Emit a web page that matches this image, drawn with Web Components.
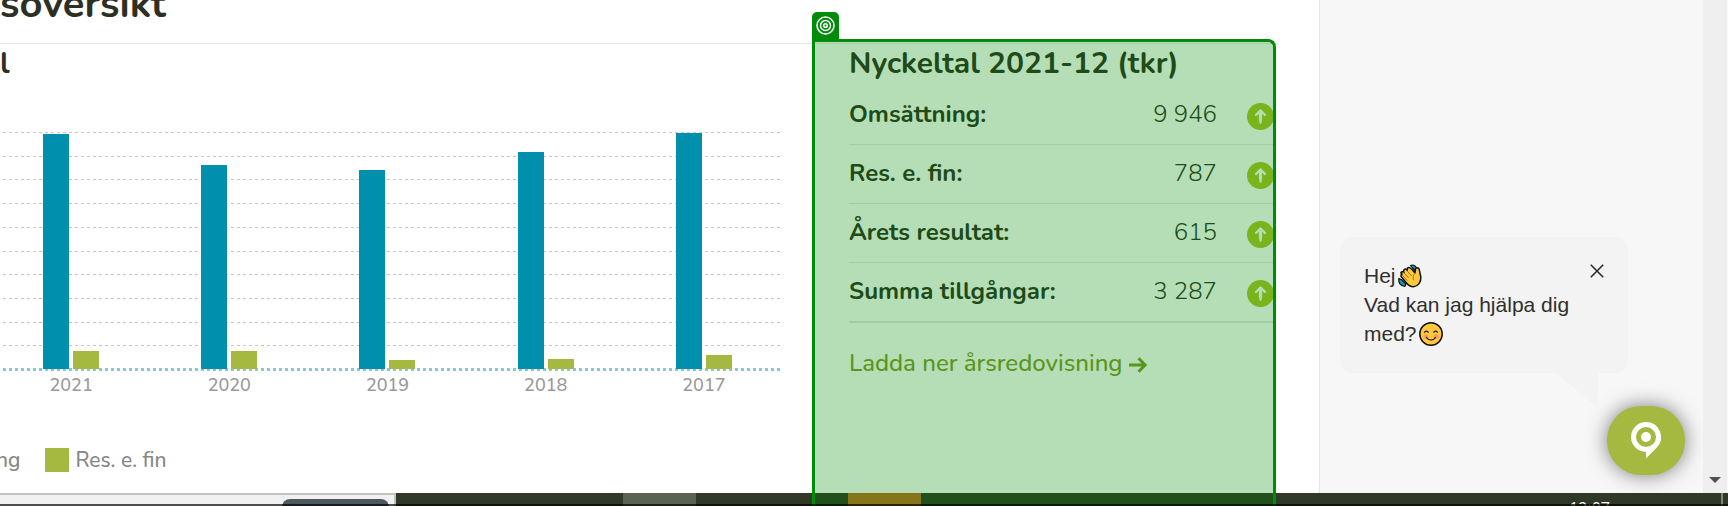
<!DOCTYPE html>
<html lang="sv">
<head>
<meta charset="utf-8">
<title>Nyckeltal</title>
<style>
body { margin: 0; font-family: Nunito, "Open Sans", sans-serif; color: #2c2f22; background: #fff; }
</style>
</head>
<body>
<app-page>
  <company-report>
    <key-chart slot="chart"></key-chart>
    <key-figures slot="figures"></key-figures>
  </company-report>
  <chat-aside></chat-aside>
  <scroll-track></scroll-track>
  <task-bar slot="bottom"></task-bar>
</app-page>
<script>
const define = (name, html) => customElements.define(name, class extends HTMLElement {
  constructor() {
    super();
    this.attachShadow({ mode: 'open' }).innerHTML = html(this);
  }
});

define('app-page', () => `
<style>
  :host { display: flex; flex-direction: column; height: 100vh; overflow: hidden; }
  main { flex: 1; display: flex; min-height: 0; }
</style>
<main><slot></slot></main>
<slot name="bottom"></slot>`);

define('company-report', () => `
<style>
  :host { flex: 1; min-width: 0; display: flex; flex-direction: column; padding-right: 43px; }
  header { border-bottom: 1px solid #e6e8e6; padding-bottom: 35px; }
  h1 { margin: 0; font-size: 40px; line-height: 8px; font-weight: 700; }
  .columns { flex: 1; display: grid; grid-template-columns: minmax(0, 1fr) 464px; }
</style>
<header><h1>söversikt</h1></header>
<div class="columns"><slot name="chart"></slot><slot name="figures"></slot></div>`);

const years = [
  [2021, 235, 18], [2020, 204, 18], [2019, 199, 9], [2018, 217, 10], [2017, 236, 14],
];
define('key-chart', () => `
<style>
  :host { display: block; padding-right: 29px; overflow: hidden; }
  h2 { margin: 0; font-size: 30px; line-height: 40px; font-weight: 700; }
  figure { margin: 48px 0 0 -8px; }
  .plot { display: grid; height: 237px; }
  .plot > * { grid-area: 1 / 1; }
  .lines { display: grid; grid-template-rows: repeat(10, 1fr); }
  .lines i { background: repeating-linear-gradient(90deg, #c6c6c6 0 2px, transparent 2px 5px, #c6c6c6 5px 6px) 0 0 / 100% 1px no-repeat; }
  .zero { align-self: end; height: 3px; margin-bottom: -2px;
    background: repeating-linear-gradient(90deg, #86c8d8 0 2px, transparent 2px 5px, #86c8d8 5px 6px); }
  .bars, .years { display: grid; grid-template-columns: repeat(5, 1fr); }
  .group { display: flex; justify-content: center; align-items: flex-end; gap: 4px; }
  .group b { width: 26px; height: var(--h); background: #008fac; }
  .group b + b { background: #a5b840; }
  .years { margin-top: 4px; font-size: 18px; line-height: 24px; font-weight: 500; text-align: center; color: #999; }
  .legend { display: flex; align-items: center; margin: 51px 0 0 -4px; font-size: 21px; line-height: 24px; font-weight: 500; color: #868686; }
  .legend i { width: 24px; height: 24px; margin: 0 6px 0 25px; background: #a5b840; }
</style>
<h2>l</h2>
<figure>
  <div class="plot">
    <div class="lines">${'<i></i>'.repeat(10)}</div>
    <div class="zero"></div>
    <div class="bars">${years.map(([, a, b]) => `<div class="group"><b style="--h:${a}px"></b><b style="--h:${b}px"></b></div>`).join('')}</div>
  </div>
  <div class="years">${years.map(([y]) => `<span>${y}</span>`).join('')}</div>
</figure>
<div class="legend"><span>ng</span><i></i><span>Res. e. fin</span></div>`);

define('up-icon', () => `
<style>:host { display: block; } svg { display: block; margin-left: auto; }</style>
<svg width="27" height="27" viewBox="0 0 27 27" aria-hidden="true">
  <circle cx="13.500" cy="13.500" r="13.500" fill="#abc428"/>
  <path d="M13.500 7.500 9 12M13.500 7.500 18 12" stroke="#fff" stroke-width="2.400" stroke-linecap="round"/>
  <path d="M11.900 7.500h3.200v9l-.8 4.200h-1.600l-.8-4.200z" fill="#fff"/>
</svg>`);

const figures = [['Omsättning:', '9 946'], ['Res. e. fin:', '787'], ['Årets resultat:', '615'], ['Summa tillgångar:', '3 287']];
define('key-figures', () => `
<style>
  :host { display: block; position: relative; padding: 0 2px 0 37px; }
  h2 { margin: 0 0 2px; font-size: 30px; line-height: 40px; font-weight: 700; }
  table { width: 100%; border-spacing: 0; font-size: 24px; line-height: 56px; }
  th, td { padding: 0 0 2px; border-bottom: 1px solid #e2e6e2; }
  th { text-align: left; font-weight: 700; }
  td { text-align: right; font-weight: 300; }
  td:last-child { width: 57px; padding: 2px 0 0; }
  tr:last-child > * { border-bottom-width: 2px; }
  a { display: inline-flex; align-items: center; gap: 6px; margin-top: 20px; color: #7f982a;
    font-size: 24px; line-height: 40px; font-weight: 500; text-decoration: none; }
  a svg { margin-top: 4px; }
</style>
<h2>Nyckeltal 2021-12 (tkr)</h2>
<table>${figures.map(([k, v]) => `<tr><th scope="row">${k}</th><td>${v}</td><td><up-icon></up-icon></td></tr>`).join('')}</table>
<a href="#arsredovisning">Ladda ner årsredovisning
  <svg width="18" height="16" viewBox="0 0 18 16" fill="none" stroke="currentColor" stroke-width="3" aria-hidden="true"><path d="M0 8h15M9.500 1.200 16.200 8l-6.700 6.800"/></svg>
</a>
<target-highlight></target-highlight>`);

define('target-highlight', () => `
<style>
  :host { position: absolute; inset: -6px 0 -13px 0; z-index: 2; pointer-events: none; }
  .frame { box-sizing: border-box; height: 100%; border: solid #008c0a; border-width: 3px 3px 0; border-radius: 0 8px 0 0;
    background: rgba(0, 141, 4, .29) padding-box; }
  .tab { position: absolute; left: 0; bottom: 100%; display: grid; place-items: center; width: 27px; height: 27px;
    border-radius: 5px 5px 0 0; background: #008c0a; }
  :host { top: -5px; }
</style>
<div class="tab"><svg width="19" height="19" viewBox="0 0 19 19" fill="none" stroke="#fff" stroke-width="1.500" aria-hidden="true">
  <circle cx="9.500" cy="9.500" r="8.500"/><circle cx="9.500" cy="9.500" r="5"/><circle cx="9.500" cy="9.500" r="1.800"/></svg></div>
<div class="frame"></div>`);

define('chat-aside', () => `
<style>
  :host { box-sizing: border-box; width: 384px; display: flex; flex-direction: column; justify-content: flex-end; align-items: flex-end;
    gap: 33px; padding: 0 18px 18px 0; border-left: 1px solid #e4e4e4; background: #f7f7f7; }
  .bubble { position: relative; display: flex; justify-content: space-between; align-items: flex-start; box-sizing: border-box;
    width: 288px; margin-right: 57px; padding: 24px 20px 25px 24px; border-radius: 14px; background: #f3f3f3;
    font: 21px/29px "Liberation Sans", Arial, sans-serif; color: #2f2f2f; }
  .bubble::after { content: ""; position: absolute; top: 100%; right: 30px; width: 42px; height: 35px; background: #f3f3f3;
    clip-path: polygon(0 0, 100% 0, 100% 100%); }
  p { margin: 0; white-space: nowrap; }
  p svg { vertical-align: -5px; margin-left: 2px; }
  button { display: block; padding: 0; border: 0; background: none; }
  .close { padding: 3px 4px; }
  .close svg, .launch svg { display: block; }
  .launch { display: grid; place-items: center; width: 78px; height: 69px; border-radius: 34px; background: #a5b840;
    box-shadow: 0 0 20px rgba(0, 0, 0, .5); }
</style>
<div class="bubble">
  <p>Hej<svg width="24" height="24" viewBox="0 0 24 24" role="img" aria-label="Vinkande hand" stroke="#111" stroke-linejoin="round" stroke-linecap="round">
      <path d="M12.500 1.500c3-1.500 6 .5 7 4.500l-1 2-4-4zM1 14.500c-1 3.500 1 7.500 6 7.800l1-2.300-4-4z" fill="#2a8fa8" stroke-width="1.200"/>
      <path d="M3 8.500c.8-1.300 2-1 3 0-.8-1.500-.3-2.800.8-3.300 1-.4 1.800.2 2.500 1C9 4.500 9.700 3.400 11 3.400c1 0 2 1 3.500 2.600l2.500 3 .5-4c.3-1.500 3-1.800 3.700.3l1.600 7.700c.5 5-2.800 9.500-7.300 9.700-3 .1-5-1.200-7-3.700l-5-6c-1-1.500-.5-2.500.5-3-.8-.5-1.300-1-.999-1.500z" fill="#ffc83d" stroke-width="1.500"/>
      <path d="m5.500 8.500 5 5.300M8.500 6.300l5 5.500M4.500 11.500l4.500 4.800M17 9c-1.500 2-2.500 4-1.500 7" fill="none" stroke="#a66a1a" stroke-width=".9"/>
    </svg><br>Vad kan jag hjälpa dig<br>med?<svg width="24" height="24" viewBox="0 0 24 24" role="img" aria-label="Leende ansikte" fill="none" stroke="#111" stroke-linecap="round">
      <circle cx="12" cy="12" r="11.200" fill="#ffc83d" stroke-width="1.500"/>
      <circle cx="6.800" cy="14.500" r="2.500" fill="#ff9a5c" stroke="none"/><circle cx="17.200" cy="14.500" r="2.500" fill="#ff9a5c" stroke="none"/>
      <path d="M5.500 10.300c.7-1.700 3-1.700 3.700 0M14.800 10.300c.7-1.700 3-1.700 3.700 0M7.500 15.500c2 3.300 7 3.300 9 0" stroke-width="1.200"/>
    </svg></p>
  <button class="close" aria-label="Stäng"><svg width="14" height="14" viewBox="0 0 14 14" stroke="#2a2a2a" stroke-width="1.600"><path d="m.8.8 12.400 12.400M13.200.8.8 13.200"/></svg></button>
</div>
<button class="launch" aria-label="Öppna chatt"><svg width="30" height="37" viewBox="0 0 30 37">
  <path fill="#fff" fill-rule="evenodd" d="M15 0a15 15 0 0 1 10.800 25.400L15 36.500V30A15 15 0 0 1 15 0zm0 5a10 10 0 1 0 0 20 10 10 0 0 0 0-20z"/>
  <circle cx="15" cy="15" r="5" fill="#fff"/></svg></button>`);

define('scroll-track', () => `
<style>
  :host { box-sizing: border-box; width: 25px; display: flex; flex-direction: column; justify-content: flex-end; align-items: center;
    padding-bottom: 10px; border-right: 1px solid #f8f8f8; background: #efefef; }
  svg { display: block; }
</style>
<svg width="12" height="6" viewBox="0 0 12 6" aria-hidden="true"><path d="M0 0h12L6 6z" fill="#505050"/></svg>`);

define('task-bar', () => `
<style>
  :host { position: relative; display: flex; justify-content: space-between; height: 13px; overflow: hidden; background: #303828; }
  :host::after { content: ""; position: absolute; z-index: 3; inset: 11px 0 0; background: rgba(0, 0, 0, .68); }
  .window { box-sizing: border-box; width: 396px; display: flex; justify-content: flex-end; padding: 4px 5px 0 0;
    border: solid #c2c2c2; border-width: 2px 2px 0 0; background: #f1f1f1; }
  .pill { width: 107px; height: 20px; border-radius: 8px; background: #4e585f; }
  .apps { flex: 1; display: flex; gap: 152px; padding-left: 227px; }
  .apps i { width: 73px; background: #5a6351; }
  .apps i + i { background: #bd6c24; }
  time { margin-right: 111px; padding-top: 5px; font: 16px/20px "Open Sans", sans-serif; color: #fff; }
  .edge { width: 2px; margin-right: 5px; background: #80857c; }
</style>
<div class="window"><div class="pill"></div></div>
<div class="apps"><i></i><i></i></div>
<time>12:07</time>
<div class="edge"></div>`);
</script>
</body>
</html>
